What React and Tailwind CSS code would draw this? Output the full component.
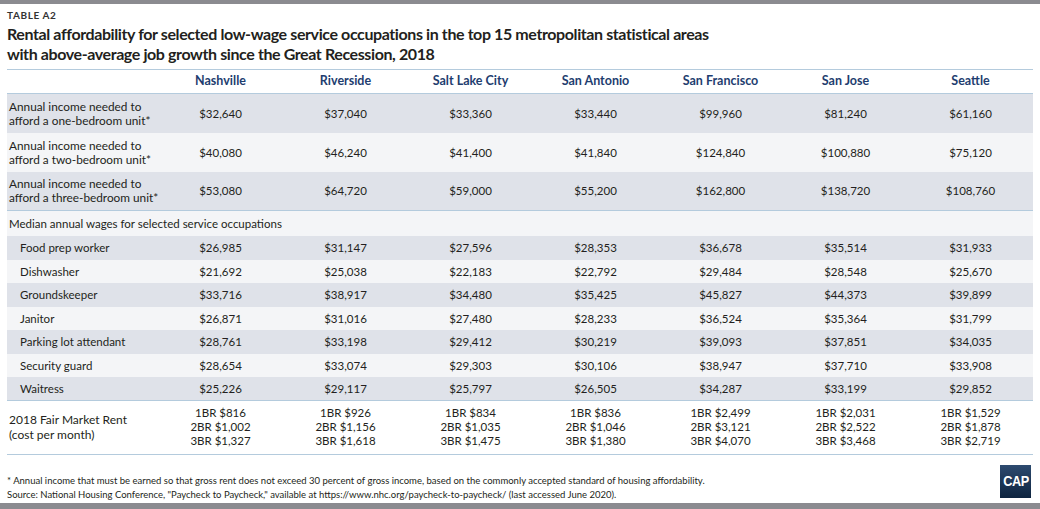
import React from 'react';

const cities = ['Nashville', 'Riverside', 'Salt Lake City', 'San Antonio', 'San Francisco', 'San Jose', 'Seattle'];

const income = [
  { label: ['Annual income needed to', 'afford a one-bedroom unit*'], vals: ['$32,640', '$37,040', '$33,360', '$33,440', '$99,960', '$81,240', '$61,160'] },
  { label: ['Annual income needed to', 'afford a two-bedroom unit*'], vals: ['$40,080', '$46,240', '$41,400', '$41,840', '$124,840', '$100,880', '$75,120'] },
  { label: ['Annual income needed to', 'afford a three-bedroom unit*'], vals: ['$53,080', '$64,720', '$59,000', '$55,200', '$162,800', '$138,720', '$108,760'] },
];

const wages = [
  { label: 'Food prep worker', vals: ['$26,985', '$31,147', '$27,596', '$28,353', '$36,678', '$35,514', '$31,933'] },
  { label: 'Dishwasher', vals: ['$21,692', '$25,038', '$22,183', '$22,792', '$29,484', '$28,548', '$25,670'] },
  { label: 'Groundskeeper', vals: ['$33,716', '$38,917', '$34,480', '$35,425', '$45,827', '$44,373', '$39,899'] },
  { label: 'Janitor', vals: ['$26,871', '$31,016', '$27,480', '$28,233', '$36,524', '$35,364', '$31,799'] },
  { label: 'Parking lot attendant', vals: ['$28,761', '$33,198', '$29,412', '$30,219', '$39,093', '$37,851', '$34,035'] },
  { label: 'Security guard', vals: ['$28,654', '$33,074', '$29,303', '$30,106', '$38,947', '$37,710', '$33,908'] },
  { label: 'Waitress', vals: ['$25,226', '$29,117', '$25,797', '$26,505', '$34,287', '$33,199', '$29,852'] },
];

const fmr = [
  ['1BR $816', '2BR $1,002', '3BR $1,327'],
  ['1BR $926', '2BR $1,156', '3BR $1,618'],
  ['1BR $834', '2BR $1,035', '3BR $1,475'],
  ['1BR $836', '2BR $1,046', '3BR $1,380'],
  ['1BR $2,499', '2BR $3,121', '3BR $4,070'],
  ['1BR $2,031', '2BR $2,522', '3BR $3,468'],
  ['1BR $1,529', '2BR $1,878', '3BR $2,719'],
];

const rowGrid = 'grid grid-cols-[151px_repeat(7,125px)] items-center';

export default function App() {
  return (
    <div className="w-[1040px] h-[509px] bg-white flex flex-col text-[#231f20] overflow-hidden" style={{ fontFamily: 'Lato, "Open Sans", sans-serif' }}>
      {/* barra superior */}
      <div className="h-[4px] bg-[#8b8b90]" />

      <div className="px-[7px] flex-1 flex flex-col">
        <div className="mt-[5px] h-[12px] text-[10px] leading-[12px] font-bold tracking-[0.06em] text-[#333]">TABLE A2</div>
        <h1 className="mt-[3px] text-[16px] leading-[20px] font-bold tracking-[-0.4px] text-[#231f20]">
          Rental affordability for selected low-wage service occupations in the top 15 metropolitan statistical areas
          <br />
          with above-average job growth since the Great Recession, 2018
        </h1>

        {/* tabela */}
        <div className="mt-[5px] w-[1026px] text-[11.5px]">
          <div className={`${rowGrid} h-[25px] border-t border-b border-[#b4cbdd]`}>
            <div />
            {cities.map((c) => (
              <div key={c} className="text-center font-bold text-[12.5px] text-[#1e3d6f]">{c}</div>
            ))}
          </div>

          {income.map((r, i) => (
            <div key={i} className={`${rowGrid} h-[39px] ${i % 2 === 0 ? 'bg-[#dfe2e9]' : 'bg-[#f4f5f7]'} ${i === 2 ? 'border-b border-[#b4cbdd]' : ''}`}>
              <div className="pl-[2px] leading-[14px] text-[11.8px] whitespace-nowrap">
                {r.label[0]}<br />{r.label[1]}
              </div>
              {r.vals.map((v, j) => (
                <div key={j} className="text-center">{v}</div>
              ))}
            </div>
          ))}

          <div className="h-[25px] bg-[#f4f5f7] flex items-center pl-[2px]">
            Median annual wages for selected service occupations
          </div>

          {wages.map((r, i) => (
            <div key={r.label} className={`${rowGrid} h-[23.5px] ${i % 2 === 0 ? 'bg-[#dfe2e9]' : 'bg-[#f4f5f7]'} ${i === wages.length - 1 ? 'border-b border-[#b4cbdd]' : ''}`}>
              <div className="pl-[13px]">{r.label}</div>
              {r.vals.map((v, j) => (
                <div key={j} className="text-center">{v}</div>
              ))}
            </div>
          ))}

          <div className={`${rowGrid} h-[54px] border-b border-[#b4cbdd]`}>
            <div className="pl-[2px] leading-[15px] text-[12px]">
              2018 Fair Market Rent<br />(cost per month)
            </div>
            {fmr.map((f, j) => (
              <div key={j} className="text-center leading-[14px]">
                {f.map((l) => (<div key={l}>{l}</div>))}
              </div>
            ))}
          </div>
        </div>

        {/* notas */}
        <div className="flex items-end justify-between mt-auto mb-[1px]">
          <div className="text-[9.5px] leading-[14px] text-[#231f20]">
            <p>* Annual income that must be earned so that gross rent does not exceed 30 percent of gross income, based on the commonly accepted standard of housing affordability.</p>
            <p>Source: National Housing Conference, "Paycheck to Paycheck," available at https://www.nhc.org/paycheck-to-paycheck/ (last accessed June 2020).</p>
          </div>
          <div className="w-[31px] h-[33px] mr-[2px] mb-[4px] bg-gradient-to-b from-[#2d4b70] to-[#0f2540] flex items-center justify-center">
            <span className="inline-block scale-x-85 text-white font-bold text-[15px] tracking-[-0.04em]" style={{ fontFamily: '"Liberation Sans", sans-serif' }}>CAP</span>
          </div>
        </div>
      </div>

      {/* barra inferior */}
      <div className="h-[6px] bg-[#8b8b90]" />
    </div>
  );
}
